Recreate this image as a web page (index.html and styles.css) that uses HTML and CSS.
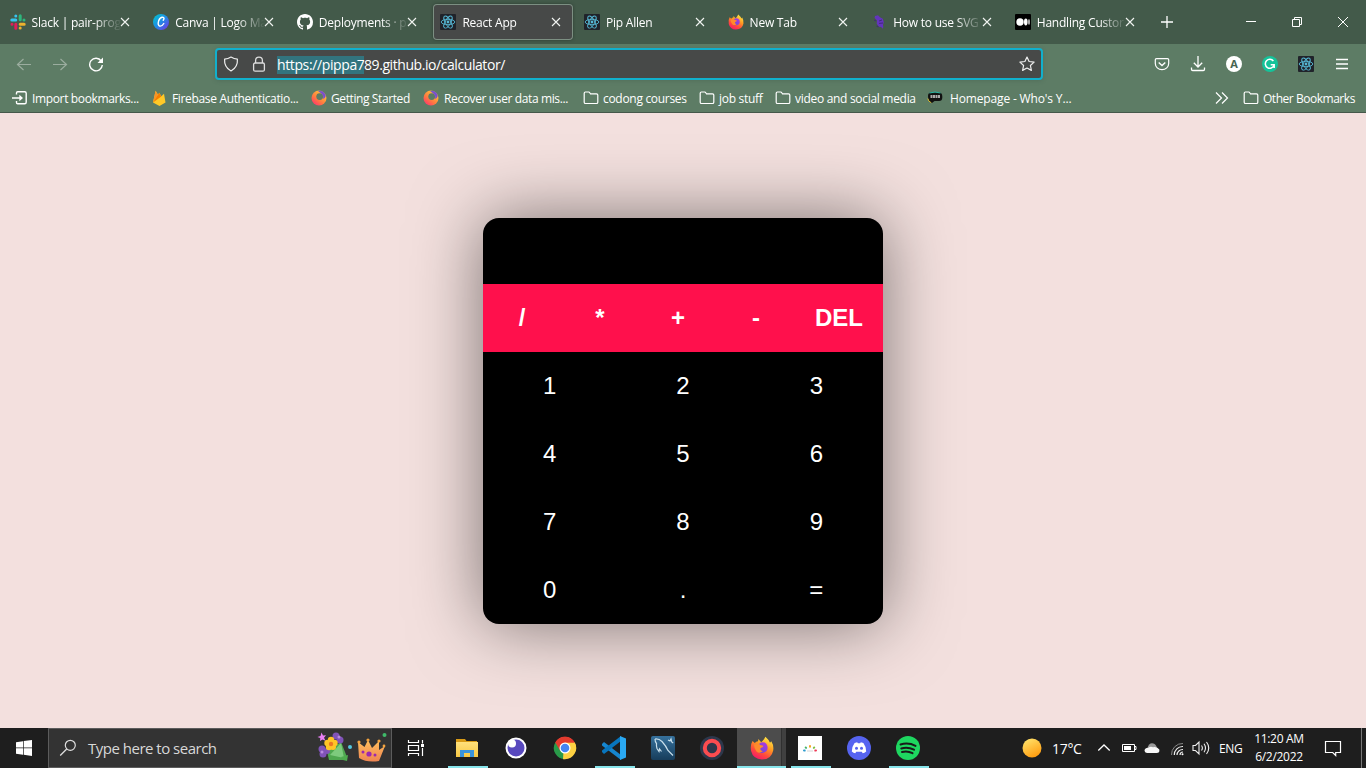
FILE: index.html
```html
<!DOCTYPE html>
<html lang="en">
<head>
<meta charset="utf-8">
<title>React App</title>
<link rel="stylesheet" href="styles.css">
</head>
<body>
<svg class="defs" width="0" height="0">
  <defs>
    <linearGradient id="canvaFill" x1="0" y1="0" x2="1" y2="1"><stop offset="0" stop-color="#00c9cc"/><stop offset=".5" stop-color="#1f8be5"/><stop offset="1" stop-color="#7d2ae8"/></linearGradient>
    <linearGradient id="foxFill" x1=".8" y1="0" x2=".25" y2="1"><stop offset="0" stop-color="#fff04a"/><stop offset=".4" stop-color="#ff9a22"/><stop offset=".7" stop-color="#ff4a3d"/><stop offset="1" stop-color="#f5156c"/></linearGradient>
    <linearGradient id="foxCore" x1="1" y1="0" x2="0" y2="1"><stop offset="0" stop-color="#b833e1"/><stop offset="1" stop-color="#5a4fd8"/></linearGradient>
    <linearGradient id="swirl" x1=".9" y1="0" x2=".1" y2="1"><stop offset="0" stop-color="#7646d8"/><stop offset=".25" stop-color="#ffb03a"/><stop offset=".6" stop-color="#ff7a40"/><stop offset="1" stop-color="#ff2a75"/></linearGradient>
    <linearGradient id="sunFill" x1=".2" y1="0" x2=".7" y2="1"><stop offset="0" stop-color="#ffe36b"/><stop offset="1" stop-color="#ff9a0c"/></linearGradient>
    <linearGradient id="folderFill" x1="0" y1="0" x2="0" y2="1"><stop offset="0" stop-color="#ffe07c"/><stop offset="1" stop-color="#f8c944"/></linearGradient>
    <linearGradient id="sqlFill" x1="0" y1="0" x2="0" y2="1"><stop offset="0" stop-color="#36719c"/><stop offset="1" stop-color="#173d5b"/></linearGradient>
    <linearGradient id="crownFill" x1="0" y1="0" x2="0" y2="1"><stop offset="0" stop-color="#ffc05c"/><stop offset="1" stop-color="#ee8452"/></linearGradient>
    <symbol id="react" viewBox="0 0 16 16"><rect width="16" height="16" rx="1" fill="#20232a"/><g fill="none" stroke="#56b9d6" stroke-width=".9"><ellipse cx="8" cy="8" rx="6.8" ry="2.7"/><ellipse cx="8" cy="8" rx="6.8" ry="2.7" transform="rotate(60 8 8)"/><ellipse cx="8" cy="8" rx="6.8" ry="2.7" transform="rotate(120 8 8)"/></g><circle cx="8" cy="8" r="1.4" fill="#56b9d6"/></symbol>
    <symbol id="close" viewBox="0 0 10 10"><path d="M1 1l8 8M9 1L1 9" fill="none" stroke="#f2f4f2" stroke-width="1.1"/></symbol>
    <symbol id="folder" viewBox="0 0 16 14"><path d="M1.2 11.2V2.2Q1.2 1 2.4 1h3.2Q6.400 1 6.800 1.800L7.500 2.800h6q1.300 0 1.300 1.300v7.100q0 1.300-1.300 1.300h-11q-1.300 0-1.300-1.300z" fill="none" stroke="#fff" stroke-width="1.2"/></symbol>
    <symbol id="firefox" viewBox="0 0 24 24"><path d="M2.500 5l2.300 2Q6 5.500 8 5.300L8.400 3l2.800 3.200Q14 4 15.400.7q3.500 3 4.600 6l1.300-1.500Q24 9.500 23.200 14.400 21.500 23.300 12 23.400 3 23 1.100 15 0 9 2.500 5z" fill="url(#foxFill)"/><path d="M9.500 7.200q4-2 6.800.5 2.700 4.200 0 7.600-4 3-7.800.7Q6.300 14 7.500 11l3 .5 2-1.600-3-.7z" fill="url(#foxCore)"/><path d="M4 8.500q4-1.500 6.500.7l3 .6q-.5 2-3 2.200-.8 2.700 2.500 2.900-3.500 3.300-6.500.5Q4 12.500 4 8.500z" fill="#ff8b2c"/></symbol>
    <symbol id="swirlIcon" viewBox="0 0 16 16"><circle cx="8" cy="8" r="7.500" fill="url(#swirl)"/><circle cx="8.700" cy="6.600" r="3.400" fill="#5d7c65"/><path d="M7 1.200Q13 0 14.700 6q-1 3-2.700 2.700Q13.500 4.500 7 1.200z" fill="#7850cf"/></symbol>
  </defs>
</svg>
<header class="tabs">
  <div class="tab"><svg class="fav" viewBox="0 0 16 16"><g stroke-width="3" stroke-linecap="round"><path d="M5.800 2v.1M1.800 6h4" stroke="#36c5f0"/><path d="M14 6v.1M10.200 1.800v4" stroke="#2eb67d"/><path d="M10.200 14v.1M10.200 10.200h4" stroke="#ecb22e"/><path d="M2 10.200v.1M5.800 10.200v4" stroke="#e01e5a"/></g></svg><span class="label">Slack | pair-prog</span><svg class="x"><use href="#close"/></svg></div>
  <div class="tab"><svg class="fav" viewBox="0 0 16 16"><circle cx="8" cy="8" r="8" fill="url(#canvaFill)"/><path d="M10.200 6.200q1.600-2 0-2.800-2.800-.7-4.500 3.200-1.300 4.400.8 5.400 2.500.6 4.300-2.500" fill="none" stroke="#fff" stroke-width="1.400" stroke-linecap="round"/></svg><span class="label">Canva | Logo Ma</span><svg class="x"><use href="#close"/></svg></div>
  <div class="tab"><svg class="fav" viewBox="0 0 16 16"><path fill="#fff" d="M8 0C3.580 0 0 3.580 0 8c0 3.540 2.290 6.530 5.470 7.590.4.070.55-.17.55-.38 0-.19-.01-.82-.01-1.490-2.010.37-2.530-.49-2.690-.94-.09-.23-.48-.94-.82-1.130-.28-.15-.68-.52-.01-.53.63-.01 1.080.58 1.230.82.72 1.210 1.870.87 2.330.66.070-.52.28-.87.51-1.070-1.780-.2-3.640-.89-3.640-3.950 0-.87.31-1.590.82-2.150-.08-.2-.36-1.020.08-2.120 0 0 .67-.21 2.200.82.64-.18 1.320-.27 2-.27s1.360.09 2 .27c1.530-1.040 2.200-.82 2.200-.82.44 1.100.16 1.920.08 2.120.51.56.82 1.270.82 2.150 0 3.070-1.870 3.750-3.650 3.950.29.25.54.73.54 1.480 0 1.070-.01 1.930-.01 2.200 0 .21.150.46.55.38A8 8 0 0 0 16 8c0-4.420-3.580-8-8-8z"/></svg><span class="label">Deployments · p</span><svg class="x"><use href="#close"/></svg></div>
  <div class="tab active"><svg class="fav"><use href="#react"/></svg><span class="label">React App</span><svg class="x"><use href="#close"/></svg></div>
  <div class="tab"><svg class="fav"><use href="#react"/></svg><span class="label">Pip Allen</span><svg class="x"><use href="#close"/></svg></div>
  <div class="tab"><svg class="fav"><use href="#firefox"/></svg><span class="label">New Tab</span><svg class="x"><use href="#close"/></svg></div>
  <div class="tab"><svg class="fav" viewBox="0 0 16 16"><path d="M4 2l3-.8 2 2 2.800 1.500 1 3.500-.8 2.500.3 2.500-1 1.500-1-1.600-2.300-.3-2.300-3 .3-3.300L3.600 4z" fill="#6334bd"/><path d="M3 6l2 1M5.500 12l2 1M11 6l-3 1M12 9l-4 .4" stroke="#3e2775" stroke-width=".9"/></svg><span class="label">How to use SVG</span><svg class="x"><use href="#close"/></svg></div>
  <div class="tab"><svg class="fav" viewBox="0 0 16 16"><rect width="16" height="16" rx="1" fill="#000"/><circle cx="5" cy="8" r="3.700" fill="#fff"/><ellipse cx="10.800" cy="8" rx="1.800" ry="3.400" fill="#fff"/><ellipse cx="14" cy="8" rx=".7" ry="3" fill="#fff"/></svg><span class="label">Handling Custor</span><svg class="x"><use href="#close"/></svg></div>
  <svg class="plus" viewBox="0 0 12 12"><path d="M6 0v12M0 6h12" stroke="#fff" stroke-width="1.300"/></svg>
  <div class="window">
    <svg viewBox="0 0 12 12"><path d="M1 5.500h10" stroke="#fff"/></svg>
    <svg viewBox="0 0 12 12"><path d="M1.500 3.500h7v7h-7zM3.500 3V1.500h7v7H9" fill="none" stroke="#fff"/></svg>
    <svg viewBox="0 0 12 12"><path d="M1 1l10 10M11 1L1 11" stroke="#fff"/></svg>
  </div>
</header>
<div class="toolbar">
  <div class="nav">
    <svg class="back" viewBox="0 0 16 16"><path d="M15 8.500H1.500M7.500 3L1.500 8.500l6 5.500" fill="none" stroke="#9bad9f" stroke-width="1.200"/></svg>
    <svg class="fwd" viewBox="0 0 16 16"><path d="M1 8.500h13.500M8.500 3l6 5.500-6 5.500" fill="none" stroke="#9bad9f" stroke-width="1.200"/></svg>
    <svg class="reload" viewBox="0 0 16 16"><path d="M13.200 5A6.300 6.300 0 1 0 14.300 9" fill="none" stroke="#fff" stroke-width="1.400"/><path d="M15 1.500v5.500H9.500z" fill="#fff"/></svg>
    <div class="url">
      <svg class="shield" viewBox="0 0 16 16"><path d="M8 1Q11 2.800 14.400 3.200 15 11 8 15 1 11 1.600 3.200 5 2.800 8 1z" fill="none" stroke="#eee" stroke-width="1.200" stroke-linejoin="round"/></svg>
      <svg class="lock" viewBox="0 0 16 16"><rect x="2.600" y="7" width="10.800" height="8.200" rx="1.500" fill="none" stroke="#ddd" stroke-width="1.300"/><path d="M4.600 7V4.500a3.400 3.400 0 0 1 6.800 0V7" fill="none" stroke="#ddd" stroke-width="1.300"/></svg>
      <span class="address"><span class="picked">https://pippa7</span><span class="rest">89.github.io/calculator/</span></span>
      <svg class="star" viewBox="0 0 16 16"><path d="M8 1l2.100 4.500 5 .6-3.700 3.400 1 4.900L8 12l-4.400 2.400 1-4.900L.9 6.100l5-.6z" fill="none" stroke="#eee" stroke-width="1.200" stroke-linejoin="round"/></svg>
    </div>
    <div class="actions">
      <svg viewBox="0 0 16 16"><path d="M2.500 2.600h11q1.200 0 1.200 1.200V7.500a6.700 6.200 0 0 1-13.400 0V3.800q0-1.200 1.200-1.200z" fill="none" stroke="#fff" stroke-width="1.200"/><path d="M4.700 6.500L8 9.600l3.300-3.100" fill="none" stroke="#fff" stroke-width="1.400"/></svg>
      <svg viewBox="0 0 16 16"><path d="M8 0v11M3.800 6.800L8 11l4.200-4.200M1.500 11.500v1.800q0 1.200 1.200 1.200h10.600q1.200 0 1.200-1.200v-1.800" fill="none" stroke="#fff" stroke-width="1.300"/></svg>
      <span class="round">A</span>
      <svg viewBox="0 0 16 16"><circle cx="8" cy="8" r="8" fill="#15c39a"/><path d="M11.400 5A4.500 4.500 0 1 0 12 9.500M8.700 8.800h3.500v3.200" fill="none" stroke="#fff" stroke-width="1.500"/></svg>
      <svg><use href="#react"/></svg>
      <svg viewBox="0 0 16 16"><path d="M2 3.500h12M2 8h12M2 12.500h12" stroke="#fff" stroke-width="1.300"/></svg>
    </div>
  </div>
  <div class="bookmarks">
    <a class="b1"><svg viewBox="0 0 16 16"><path d="M4.500 4.500V3q0-1.200 1.200-1.200h7q1.500 0 1.500 1.500v9q0 1.500-1.500 1.500h-7q-1.200 0-1.200-1.200V11M0 8h9" fill="none" stroke="#fff" stroke-width="1.400"/><path d="M7.300 4.700L11 8l-3.700 3.300z" fill="#fff"/></svg><span>Import bookmarks...</span></a>
    <a class="b2"><svg viewBox="0 0 16 16"><path d="M1 12.500L3.600.8l2.400 4 1.300-2.100 2 3.600 2.700-2.500 1.500 8.700L7.500 16z" fill="#ffc928"/><path d="M1 12.500L3.600.8l2.400 4z" fill="#f5932a"/><path d="M1 12.500L7.300 2.700l2 3.700z" fill="#f57c00"/></svg><span>Firebase Authenticatio...</span></a>
    <a class="b3"><svg><use href="#swirlIcon"/></svg><span>Getting Started</span></a>
    <a class="b4"><svg><use href="#swirlIcon"/></svg><span>Recover user data mis...</span></a>
    <a class="b5"><svg><use href="#folder"/></svg><span>codong courses</span></a>
    <a class="b6"><svg><use href="#folder"/></svg><span>job stuff</span></a>
    <a class="b7"><svg><use href="#folder"/></svg><span>video and social media</span></a>
    <a class="b8"><svg viewBox="0 0 16 16"><path d="M1 6q0-3.500 3-3.500h8q3.300 0 3.300 4v1q0 3.500-3.300 3.500H7.500L5 13q-4-1-4-7z" fill="#111"/><path d="M2.500 3Q8 1 13.500 3" stroke="#29b6a5" fill="none"/><path d="M.8 8.500q.5 3 3.500 4.300" stroke="#d8b92f" fill="none"/><path d="M3.500 6.500h9.500" stroke="#aaa" stroke-width="3" stroke-dasharray="2 .5"/></svg><span>Homepage - Who's Y...</span></a>
    <a class="more"><svg viewBox="0 0 16 16"><path d="M2 2.500L7.500 8 2 13.500M8 2.500L13.500 8 8 13.500" fill="none" stroke="#fff" stroke-width="1.200"/></svg></a>
    <a class="b9"><svg><use href="#folder"/></svg><span>Other Bookmarks</span></a>
  </div>
</div>
<main class="page">
  <div class="calculator">
    <div class="display"></div>
    <div class="operators"><button>/</button><button>*</button><button>+</button><button>-</button><button>DEL</button></div>
    <div class="digits"><button>1</button><button>2</button><button>3</button><button>4</button><button>5</button><button>6</button><button>7</button><button>8</button><button>9</button><button>0</button><button>.</button><button>=</button></div>
  </div>
</main>
<footer class="taskbar">
  <div class="start"><svg viewBox="0 0 16 16"><path d="M0 2.200l7-1v6.400H0zM7.700 1.100L16 0v7.600H7.700zM0 8.300h7v6.500l-7-1zM7.700 8.300H16V16l-8.300-1.200z" fill="#fff"/></svg></div>
  <div class="search">
    <svg class="glass" viewBox="0 0 18 18"><circle cx="11.300" cy="6.300" r="5" fill="none" stroke="#ddd" stroke-width="1.200"/><path d="M7.700 10L1.200 16.500" stroke="#ddd" stroke-width="1.300"/></svg>
    <span>Type here to search</span>
    <svg class="art" viewBox="0 0 72 32"><path d="M10 19l14-9 6 15-4 3-14 0z" fill="#4fa850"/><path d="M13 23l11-12 3 15z" fill="#7dcb7d"/><path d="M24 25l7-2-1 6-4-1z" fill="#4eab4e"/><g fill="#8053b9"><circle cx="5" cy="17" r="3.500"/><circle cx="6" cy="22" r="3.500"/><circle cx="10" cy="19" r="3"/><circle cx="19" cy="4" r="3.500"/><circle cx="23" cy="8" r="3.500"/></g><g fill="#b78be0"><circle cx="5" cy="20" r="1.500"/><circle cx="22" cy="5" r="1.500"/></g><g fill="#ffc426"><circle cx="14" cy="8" r="3.200"/><circle cx="17.500" cy="11" r="3.200"/><circle cx="10.500" cy="11" r="3.200"/><circle cx="12" cy="15" r="3.200"/><circle cx="16" cy="15" r="3"/></g><circle cx="14" cy="12" r="2.200" fill="#ec7724"/><path d="M.5 5l3-1 1-3.500 1.500 3 3-.3-2 2.500 1.500 3-3-1.200-2.500 1.500.3-3z" fill="#ea80f5"/><circle cx="33" cy="15" r="2" fill="#54c8de"/><path d="M41 10l6.500 5 3.500-7 4 8 7-7 0 9 6-4-6 15q-12 2-20-3z" fill="url(#crownFill)"/><g fill="#f4a33e"><circle cx="42" cy="10" r="1.600"/><circle cx="51" cy="8" r="1.600"/><circle cx="62" cy="9" r="1.600"/><circle cx="67" cy="14" r="1.400"/></g><g fill="#9b28af"><circle cx="46" cy="20" r="1.500"/><circle cx="52" cy="22" r="2.600"/><circle cx="58" cy="23" r="1.500"/></g><circle cx="67.500" cy="3" r="2" fill="#3fba6a"/></svg>
  </div>
  <div class="view"><svg viewBox="0 0 18 16"><path d="M1.500 0v2.500h10V0M1.500 16v-2.500h10V16M1.500 5.500h10v5h-10zM15.500 0v3.500M15.500 8v8" fill="none" stroke="#fff" stroke-width="1.200"/><path d="M14 4h3v3h-3z" fill="#fff"/></svg></div>
  <div class="apps">
    <div class="app open"><svg viewBox="0 0 24 24"><path d="M1 3h9l1.500 2H22V20H1z" fill="#d99b16"/><path d="M1 6h22v15H1z" fill="url(#folderFill)"/><path d="M5 21v-7h14v7h-4v-4H9v4z" fill="#3a94dc"/></svg></div>
    <div class="app"><svg viewBox="0 0 24 24"><circle cx="12" cy="12" r="10.500" fill="#fff"/><circle cx="12" cy="12" r="8.500" fill="#5849be"/><circle cx="8" cy="7.500" r="4" fill="#fff"/></svg></div>
    <div class="app"><svg viewBox="0 0 24 24"><path d="M12 12L2.300 6.400A11.200 11.200 0 0 1 21.700 6.400z" fill="#e33b2e"/><path d="M12 12l9.700-5.600A11.200 11.200 0 0 1 12 23.200z" fill="#fdd142"/><path d="M12 12v11.200A11.200 11.200 0 0 1 2.300 6.400z" fill="#299a49"/><path d="M11 6.400h10.700q1 2 1.400 4.200L16 15l-4 8.200H10z" fill="#fdd142"/><path d="M2.300 6.400A11.200 11.200 0 0 1 21.700 6.400H12l-5 8z" fill="#e33b2e"/><circle cx="12" cy="12" r="5.500" fill="#fff"/><circle cx="12" cy="12" r="4.300" fill="#4385f3"/></svg></div>
    <div class="app open"><svg viewBox="0 0 24 24"><path d="M0 8l2-2 17 13v5L0 9.500z" fill="#1686cf"/><path d="M0 16l2 2L19 5V0L0 14.500z" fill="#0875bd"/><path d="M18 0l6 2.500v19L18 24z" fill="#2aa9f3"/></svg></div>
    <div class="app"><svg viewBox="0 0 24 24"><rect width="24" height="24" rx="2" fill="url(#sqlFill)"/><path d="M4 3q4-.5 7 2.500 4 4.500 6 9l5 5M4 3q0 3 1.500 4.500-.3 3 .5 5l2 3 .5-2.500 2 2.500M17 4l2 1 1-2 .7 3 1.500 1" fill="none" stroke="#c9dfeb" stroke-width="1.200"/></svg></div>
    <div class="app"><svg viewBox="0 0 24 24"><circle cx="12" cy="12" r="12" fill="#2d374b"/><circle cx="12" cy="12" r="7.200" fill="none" stroke="#fb4c50" stroke-width="4"/></svg></div>
    <div class="app open current"><svg><use href="#firefox"/></svg></div>
    <div class="app open"><svg viewBox="0 0 24 24"><path fill="#fff" d="M0 0h24v24H0z"/><g stroke-width="2" stroke-linecap="round"><path d="M6 14.500l.7.100" stroke="#2d9cce"/><path d="M7.700 11.500l.4.400" stroke="#45b36a"/><path d="M12 10v.8" stroke="#f5a623"/><path d="M16.200 11.500l-.4.400" stroke="#7bc043"/><path d="M18 14.500l-.7.100" stroke="#ee3a56"/></g><path d="M9.500 15h5" stroke="#aaa" stroke-dasharray="1 1"/></svg></div>
    <div class="app"><svg viewBox="0 0 24 24"><circle cx="12" cy="12" r="12" fill="#5664f0"/><path d="M7.600 7l2.600-.8.6 1.100h2.400l.6-1.100 2.600.8q3 4 2.800 8.500-1.700 1.500-3.500 1.800l-.9-1.600H9.200l-.9 1.600q-1.800-.3-3.500-1.800Q4.600 11 7.600 7z" fill="#fff"/><circle cx="9.500" cy="12.300" r="1.500" fill="#5664f0"/><circle cx="14.500" cy="12.300" r="1.500" fill="#5664f0"/></svg></div>
    <div class="app open"><svg viewBox="0 0 24 24"><circle cx="12" cy="12" r="12" fill="#1ed760"/><path d="M4.500 8.500q8-2.300 15 1.400M5.300 12.500q6.500-1.800 12.700 1.200M6 16q5.500-1.500 10.500 1.200" fill="none" stroke="#191919" stroke-width="2" stroke-linecap="round"/></svg></div>
  </div>
  <div class="tray">
    <svg class="sun" viewBox="0 0 20 20"><circle cx="10" cy="10" r="9.500" fill="url(#sunFill)"/></svg>
    <span class="temp">17°C</span>
    <svg class="up" viewBox="0 0 16 16"><path d="M2.300 10.500L8 5l5.700 5.500" fill="none" stroke="#fff" stroke-width="1.300"/></svg>
    <svg class="bat" viewBox="0 0 16 16"><path d="M1.500 4.500h12v7h-12zM13.500 6.500h1.500v3h-1.500" fill="none" stroke="#fff"/><path d="M3 6h7v4H3z" fill="#fff"/></svg>
    <svg class="cloud" viewBox="0 0 16 16"><path d="M3.500 9q0-3.500 3-5.500 4-1 6 3l1 3z" fill="#9b9b9b"/><path d="M.5 10.500q.5-3 4-2.800 2-1.700 4.500-.5 4-1 6.300 2.300.7 3.500-2.800 3.500H3q-2.500-.2-2.500-2.500z" fill="#f8f8f8"/></svg>
    <svg class="wifi" viewBox="0 0 16 16"><path d="M2.500 15A11 11 0 0 1 14 3.500" fill="none" stroke="#888"/><path d="M5.300 15A8.300 8.300 0 0 1 14 6.500M8 15a5.700 5.700 0 0 1 6-5.500M11 15a3 3 0 0 1 3-3" fill="none" stroke="#eee" stroke-width="1.200"/><circle cx="13.500" cy="14.200" r="1" fill="#fff"/></svg>
    <svg class="sound" viewBox="0 0 18 16"><path d="M1 5.500h2.500L7 2v12l-3.500-3.500H1zM9.500 5.500q1.800 2.500 0 5M12 3.800q3 4.200 0 8.400M14.500 2q4.500 6 0 12" fill="none" stroke="#eee" stroke-width="1.100"/></svg>
    <span class="lang">ENG</span>
    <div class="clock"><span>11:20 AM</span><span>6/2/2022</span></div>
    <svg class="note" viewBox="0 0 18 18"><path d="M1.500 2.500h15v11h-4.800v3l-3-3H1.500z" fill="none" stroke="#fff" stroke-width="1.200"/></svg>
    <i class="edge"></i>
  </div>
</footer>
</body>
</html>
```
FILE: styles.css
```css
* { box-sizing: border-box; }
body { margin: 0; width: 1366px; height: 768px; overflow: hidden; display: flex; flex-direction: column; font-family: "Open Sans", "Noto Sans", sans-serif; font-size: 12px; color: #fff; }
svg { display: block; flex: none; width: 16px; height: 16px; }
.defs { position: absolute; width: 0; height: 0; }
span { white-space: nowrap; }

.tabs { height: 44px; flex: none; background: #435a4a; display: flex; align-items: center; padding-left: .6px; }
.tab { width: 139.600px; height: 36px; margin: 0 2px; padding-left: 7px; display: flex; align-items: center; flex: none; border-radius: 4px; }
.tab.active { background: #474948; box-shadow: 0 0 0 1px #7c8f82 inset, 0 0 3px #2c3b31; }
.label { width: 90px; margin-left: 6px; letter-spacing: -.22px; line-height: 18px; padding-top: 1px; -webkit-mask-image: linear-gradient(90deg, #000 62px, transparent 90px); mask-image: linear-gradient(90deg, #000 62px, transparent 90px); }
.tab .x { width: 10px; height: 10px; margin-left: -1.400px; }
.plus { width: 12px; height: 12px; margin-left: 12px; }
.window { display: flex; gap: 34px; margin-left: auto; padding-right: 17px; }
.window svg { width: 12px; height: 12px; }

.toolbar { height: 69px; flex: none; background: #5d7c65; border-bottom: 1px solid #44584a; }
.nav { height: 40px; display: flex; align-items: center; }
.nav .back { margin-left: 16px; }
.nav .fwd { margin-left: 20px; }
.nav .reload { margin-left: 20px; }
.url { width: 828px; height: 32px; margin-left: 111px; padding-left: 6px; border: 2px solid #11b0cc; border-radius: 4px; background: #474948; box-shadow: 0 1px 4px #40574755; display: flex; align-items: center; }
.url .lock { margin-left: 12px; }
.address { margin-left: 10px; margin-top: 2px; font-size: 14px; line-height: 18px; display: flex; }
.picked { width: 87px; background: #32747e; letter-spacing: -.38px; }
.rest { letter-spacing: -.43px; }
.url .star { margin-left: auto; margin-right: 6px; }
.actions { display: flex; gap: 20px; margin-left: 111px; }
.round { width: 16px; height: 16px; border-radius: 50%; background: #fff; color: #466450; font: bold 11px/16px "Open Sans", sans-serif; text-align: center; }

.bookmarks { height: 28px; display: flex; align-items: center; padding-left: 12px; letter-spacing: -.3px; }
.bookmarks a { display: flex; align-items: center; gap: 4px; flex: none; }
.bookmarks span { line-height: 18px; padding-top: 1px; }
.b1 { width: 140px; letter-spacing: -.36px; }
.b2 { width: 159px; letter-spacing: -.34px; }
.b3 { width: 112px; letter-spacing: -.4px; }
.bookmarks .b4 { width: 160px; letter-spacing: -.38px; gap: 5px; }
.b5 { width: 116px; }
.b6 { width: 76px; }
.b7 { width: 152px; }
.bookmarks .b8 { width: 287px; letter-spacing: -.15px; gap: 7px; }
.more { width: 29px; }
.b9 { letter-spacing: -.47px; }

.page { flex: 1; background: #f3e0de; display: flex; justify-content: center; align-items: flex-start; padding-top: 105px; overflow: hidden; }
.calculator { width: 400px; height: 406px; border-radius: 16px; overflow: hidden; background: #000; box-shadow: 0 0 70px rgba(0, 0, 0, .5); }
.display { height: 66px; }
.calculator button { appearance: none; border: 0; background: transparent; padding: 20px; color: #fff; font: 24px/28px "Liberation Sans", Arial, sans-serif; }
.operators { display: flex; background: #ff104c; }
.calculator .operators button { flex: 1; font-weight: bold; }
.digits { display: grid; grid-template-columns: repeat(3, 1fr); }

.taskbar { height: 40px; flex: none; background: #1e1e1e; display: flex; }
.start { width: 48px; display: grid; place-items: center; }
.search { width: 344px; border: 1px solid #5c5c5c; background: #333; display: flex; align-items: center; color: #d8d8d8; font-size: 15px; letter-spacing: -.5px; }
.glass { width: 18px; height: 18px; margin-left: 10px; margin-right: 11px; }
.search .art { width: 72px; height: 32px; margin-left: auto; margin-right: 2px; }
.view { width: 51px; padding-right: 3px; display: grid; place-items: center; }
.view svg { width: 18px; }
.apps { display: flex; }
.app { width: 49px; height: 40px; display: grid; place-items: center; }
.app svg { width: 24px; height: 24px; }
.app.open { background: linear-gradient(#87e5eb, #87e5eb) 50% 100% / 40px 2px no-repeat; }
.app.current { background: linear-gradient(#87e5eb, #87e5eb) 0 100% / 100% 2px no-repeat, linear-gradient(90deg, #4c4c4c 44px, #303030 44px, #303030 45px, #404040 45px); }
.app:not(.current) svg { margin-right: 1px; }
.tray { margin-left: auto; display: flex; align-items: center; }
.sun { width: 20px; height: 20px; }
.temp { width: 44px; margin-left: 10px; font-size: 14px; letter-spacing: -.3px; }
.bat { margin-left: 9px; }
.cloud { margin-left: 7px; }
.wifi { margin-left: 9px; }
.sound { width: 18px; margin-left: 7px; }
.lang { width: 25px; margin-left: 9px; letter-spacing: -.4px; }
.clock { width: 54px; margin-left: 8px; display: flex; flex-direction: column; align-items: center; line-height: 18px; letter-spacing: -.3px; }
.note { width: 18px; height: 18px; margin-left: 18px; }
.edge { width: 1px; height: 40px; background: #777; margin: 0 4px 0 19px; }
```
